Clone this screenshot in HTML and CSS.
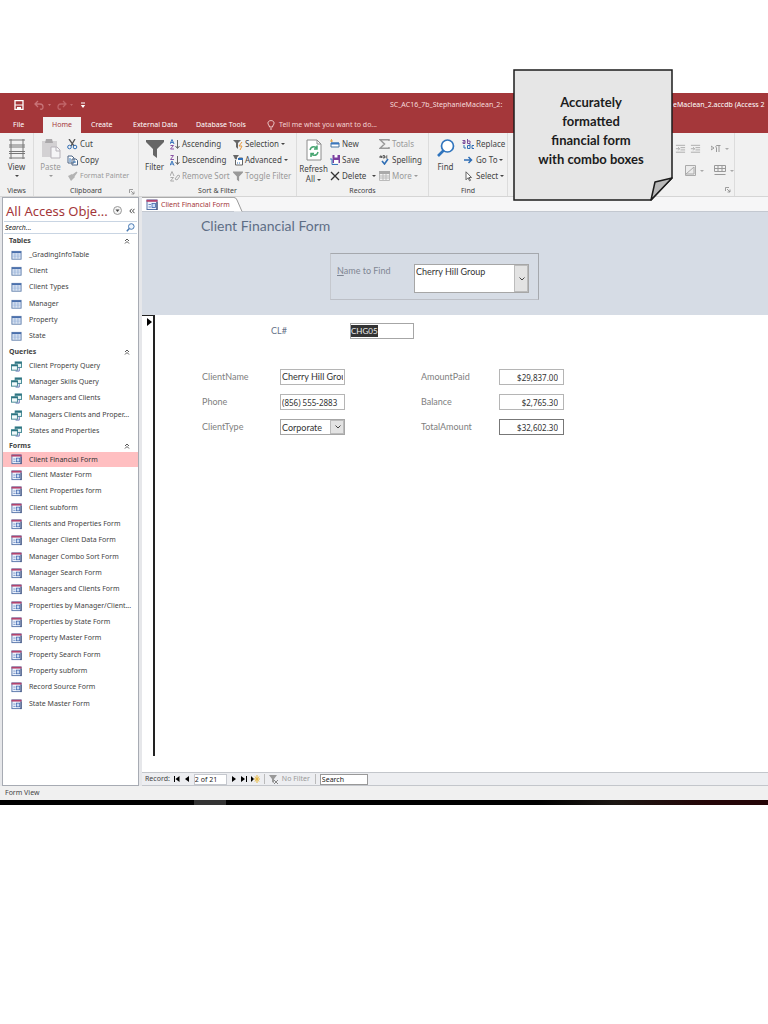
FILE: index.html
```html
<!DOCTYPE html>
<html lang="en">
<head>
<meta charset="utf-8">
<title>Client Financial Form</title>
<link rel="stylesheet" href="styles.css">
</head>
<body>
<svg class="defs" aria-hidden="true">
  <symbol id="table" viewBox="0 0 12 11"><rect x="1" y="1" width="10" height="8.500" fill="#f4f8fd" stroke="#5b7aa8"/><path d="M1 2h10" stroke="#4a70ad" stroke-width="2"/><path d="M4.300 3v6M7.600 3v6M1 5h10M1 7h10" stroke="#8aa8d4" stroke-width=".8"/></symbol>
  <symbol id="query" viewBox="0 0 12 12"><rect x="4.500" y="1" width="7" height="6" fill="#e3f3f3" stroke="#3f8590"/><path d="M4.500 2h7" stroke="#2d7381" stroke-width="2"/><rect x=".5" y="4" width="6.500" height="6" fill="#f2fafb" stroke="#3f8590"/><path d="M.5 5h7" stroke="#2d7381" stroke-width="1.500"/><path d="M5 11h4V7" fill="none" stroke="#5a6fb0"/></symbol>
  <symbol id="form" viewBox="0 0 12 12"><rect x="1" y="1" width="10" height="9.500" fill="#eef3fc" stroke="#5472a8"/><path d="M.5 1.800h11" stroke="#b3426d" stroke-width="2"/><path d="M2.500 5.500H5M2.500 8H5" stroke="#6f8fc6"/><rect x="6" y="4.500" width="3.500" height="4" fill="#c9daf4" stroke="#4068ae" stroke-width=".8"/><path d="M11 3v8" stroke="#2e3c69"/></symbol>
  <symbol id="up" viewBox="0 0 6 6"><path d="M1 3l2-2 2 2M1 5.500l2-2 2 2" fill="none" stroke="#444" stroke-width=".9"/></symbol>
  <symbol id="launch" viewBox="0 0 6 6"><path d="M.5 4V.5H4M2 2l3 3M5 2.500V5H2.500" fill="none" stroke="#888" stroke-width=".8"/></symbol>
  <symbol id="funnel" viewBox="0 0 18 18"><path d="M0 0h18v2l-7 7v9l-4-3V9L0 2z" fill="currentColor"/></symbol>
  <symbol id="indent" viewBox="0 0 12 10"><path d="M1 1h10M6 3.500h5M6 6h5M1 8.500h10M1 4.700h4M3.500 3L5 4.700 3.500 6.500" fill="none" stroke="#a9a9a9"/></symbol>
</svg>
<div class="app">
  <header class="titlebar">
    <div class="quick">
      <button aria-label="Save"><svg width="10" height="10" viewBox="0 0 10 10"><path d="M1 .7h8v8.600H1z" fill="none" stroke="#fff" stroke-width="1.300"/><path d="M1 5h8" stroke="#fff"/><path d="M3 7h4v3H3z" fill="#fff"/></svg></button>
      <button class="faded" aria-label="Undo"><svg width="18" height="10" viewBox="0 0 18 10"><path d="M4 1L1 4l3 3M1 4h5q3 0 3 3t-3 2" fill="none" stroke="#c87478" stroke-width="1.300"/><path d="M14 4h3l-1.500 2z" fill="#c87478"/></svg></button>
      <button class="faded" aria-label="Redo"><svg width="18" height="10" viewBox="0 0 18 10"><path d="M6 1l3 3-3 3M9 4H4Q1 4 1 7t3 2" fill="none" stroke="#c06468" stroke-width="1.300"/><path d="M13 4h3l-1.500 2z" fill="#c06468"/></svg></button>
      <button aria-label="Customize toolbar"><svg width="6" height="7" viewBox="0 0 6 7"><path d="M1 1h4" stroke="#fff"/><path d="M.8 3h4.400L3 6z" fill="#fff"/></svg></button>
    </div>
    <span class="db">SC_AC16_7b_StephanieMaclean_2:</span>
    <span class="path">eMaclean_2.accdb (Access 2</span>
  </header>
  <nav class="tabs">
    <a href="#" class="file">File</a><a href="#" class="on">Home</a><a href="#" class="create">Create</a><a href="#" class="ext">External Data</a><a href="#" class="tools">Database Tools</a>
    <button class="tell"><svg width="8" height="10" viewBox="0 0 8 10"><path d="M2.500 7Q2.500 6 1.500 4.800C0 2 2 .6 4 .6s4 1.400 2.500 4.200Q5.500 6 5.500 7zM3 9h2" fill="none" stroke="#f0d0d0"/></svg>Tell me what you want to do...</button>
  </nav>
  <section class="ribbon">
    <div class="group views">
      <div class="tools-row">
        <button class="big"><svg width="18" height="20" viewBox="0 0 18 20"><path d="M1 1h16M1 6h16M1 8h16M1 12.500h16M1 14.500h16M1 19h16M3 0v20M15 0v20" stroke="#777"/></svg><span>View</span><i class="caret"></i></button>
      </div>
      <div class="label">Views</div>
    </div>
    <div class="group clipboard">
      <div class="tools-row">
        <button class="big off"><svg width="20" height="20" viewBox="0 0 20 20"><path d="M1 2h15v16H1z" fill="#d3d1d3"/><path d="M5 0h6l1 4H4z" fill="#aaa8aa"/><path d="M10 8h6l3 3v8h-9z" fill="#f5f5f7" stroke="#b7b3ba"/><path d="M15 8v4h4" fill="none" stroke="#b7b3ba"/></svg><span>Paste</span><i class="caret"></i></button>
        <div class="col">
          <button><svg width="11" height="11" viewBox="0 0 11 11"><path d="M2 0l5 7M8 0L4 7" stroke="#555" stroke-width="1.300"/><circle cx="2.500" cy="8" r="1.800" fill="none" stroke="#2f6eb5"/><circle cx="8" cy="8" r="1.800" fill="none" stroke="#2f6eb5"/></svg>Cut</button>
          <button><svg width="11" height="11" viewBox="0 0 11 11"><path d="M1 1h4l2 2v5H1zM5 4h4l1.500 1.500V10H5z" fill="#fff" stroke="#4c6584"/><path d="M2 4h2M2 6h2M6 7h3" stroke="#347abf"/></svg>Copy</button>
          <button class="off wide"><svg width="11" height="11" viewBox="0 0 11 11"><path d="M9.500.5l1 1-3 4-2-2zM5 3l3 3-4 4-3-5z" fill="#b3b3b3"/></svg>Format Painter</button>
        </div>
      </div>
      <div class="label">Clipboard<svg class="corner" width="6" height="6"><use href="#launch"/></svg></div>
    </div>
    <div class="group sort">
      <div class="tools-row">
        <button class="big"><svg class="dark" width="18" height="20"><use href="#funnel"/></svg><span>Filter</span></button>
        <div class="col c1">
          <button><svg width="10" height="11" viewBox="0 0 10 11"><path d="M0 5l2-4.500L4 5M1 3.500h2" fill="none" stroke="#3a76bd"/><path d="M.5 6.500h3L.5 10h3.500" fill="none" stroke="#8a55a5"/><path d="M7.500 1v8M5.500 7l2 2.500 2-2.500" fill="none" stroke="#666"/></svg>Ascending</button>
          <button><svg width="10" height="11" viewBox="0 0 10 11"><path d="M.5.500h3L.5 4.500H4" fill="none" stroke="#8a55a5"/><path d="M0 10.500L2 6l2 4.500M1 9h2" fill="none" stroke="#3a76bd"/><path d="M7.500 1v8M5.500 7l2 2.500 2-2.500" fill="none" stroke="#666"/></svg>Descending</button>
          <button class="off"><svg width="10" height="11" viewBox="0 0 10 11"><path d="M0 5l2-4.500L4 5M.5 6.500h3L.5 10h3.500M5 8l3-4 2 1-3 4z" fill="none" stroke="#aaa"/></svg>Remove Sort</button>
        </div>
        <div class="col">
          <button><svg width="10" height="11" viewBox="0 0 10 11"><path d="M0 1h8L5 4v6L3 8V4z" fill="#666"/><path d="M9 3L6 7h3l-2 4" fill="none" stroke="#e89a3c"/></svg>Selection<i class="caret"></i></button>
          <button><svg width="10" height="11" viewBox="0 0 10 11"><path d="M0 0h6L4 2.500V5L2 4z" fill="#666"/><path d="M2.500 5v5h7V3H6" fill="#fff" stroke="#666"/><path d="M5 4h5" stroke="#2f6eb5" stroke-width="2"/><path d="M4 8h4" stroke="#2f6eb5" stroke-dasharray="1 1"/></svg>Advanced<i class="caret"></i></button>
          <button class="off"><svg width="10" height="11"><use href="#funnel"/></svg>Toggle Filter</button>
        </div>
      </div>
      <div class="label">Sort &amp; Filter</div>
    </div>
    <div class="group records">
      <div class="tools-row">
        <button class="big"><svg width="16" height="22" viewBox="0 0 16 22"><path d="M1 1h10l4 4v16H1z" fill="#fff" stroke="#8c8c8c"/><path d="M11 1v4h4" fill="none" stroke="#8c8c8c"/><path d="M4 11q1-4 5-3l2 1M11 6.500V10H8M12 13q-1 4-5 3l-2-1M5 18v-3.500h3" fill="none" stroke="#48a672" stroke-width="1.500"/></svg><span>Refresh<br>All <i class="caret"></i></span></button>
        <div class="col c1">
          <button><svg width="10" height="10" viewBox="0 0 10 10"><path d="M1 4h8v4H1z" fill="#fff" stroke="#49759f"/><path d="M1 4.500h8" stroke="#3a76bd" stroke-width="2"/><path d="M0 2h3M1.500 0v3" stroke="#e4a94e"/></svg>New</button>
          <button><svg width="10" height="10" viewBox="0 0 10 10"><path d="M2.500 0H10v8H2.500z" fill="#7b3f9e"/><path d="M4.500 0h3v2.500h-3zM4 5h4.500v3H4z" fill="#fff"/><path d="M0 4h2v5.500h6" fill="none" stroke="#3a76bd"/></svg>Save</button>
          <button><svg width="10" height="10" viewBox="0 0 10 10"><path d="M1 1l8 8M9 1L1 9" stroke="#333" stroke-width="1.300"/></svg>Delete<i class="caret far"></i></button>
        </div>
        <div class="col">
          <button class="off"><svg width="11" height="10" viewBox="0 0 11 10"><path d="M10 2V.7H1L5.500 5 1 9.300h9V8" fill="none" stroke="#999" stroke-width="1.500"/></svg>Totals</button>
          <button><svg width="11" height="10" viewBox="0 0 11 10"><path d="M1 3V1h1.500v2M1 2h1.500M4 .5v2.500h1.500V.5zM8.500 1H7v2h1.500" fill="none" stroke="#444" stroke-width=".8"/><path d="M3 6l2.500 3L9 4" fill="none" stroke="#2f6eb5" stroke-width="1.600"/></svg>Spelling</button>
          <button class="off"><svg width="11" height="10" viewBox="0 0 11 10"><path d="M.5.500h10v9H.5zM.5 5h10M.5 7h10M4 3v6M7 3v6" fill="none" stroke="#bbb"/><path d="M0 1.500h11" stroke="#aaa" stroke-width="3"/></svg>More<i class="caret"></i></button>
        </div>
      </div>
      <div class="label">Records</div>
    </div>
    <div class="group find">
      <div class="tools-row">
        <button class="big"><svg width="18" height="20" viewBox="0 0 18 20"><circle cx="10.500" cy="7" r="6" fill="#fff" stroke="#2f74bd" stroke-width="1.700"/><path d="M6.500 11.500L1 17" stroke="#2f74bd" stroke-width="2.600"/></svg><span>Find</span></button>
        <div class="col">
          <button><svg width="12" height="11" viewBox="0 0 12 11"><path d="M.5 1.500h2.500v3H1V3h2M5.500 0v4.500H8V2H5.500" fill="none" stroke="#784b9a"/><path d="M2 6v3h2M8 6.500H5.500v3H8V5M12 6.500h-2v3h2" fill="none" stroke="#2f6eb5"/></svg>Replace</button>
          <button><svg width="12" height="10" viewBox="0 0 12 10"><path d="M2 5h7M6.500 2l3 3-3 3" fill="none" stroke="#2f6eb5" stroke-width="1.500"/></svg>Go To<i class="caret"></i></button>
          <button><svg width="12" height="11" viewBox="0 0 12 11"><path d="M4 .8v8l2-2 1.500 3 1-.5L7 6.500h2.500z" fill="#fff" stroke="#555" stroke-width=".9"/></svg>Select<i class="caret"></i></button>
        </div>
      </div>
      <div class="label">Find</div>
    </div>
    <div class="group format">
      <div class="format-row">
        <button aria-label="Decrease indent"><svg width="11" height="10"><use href="#indent"/></svg></button>
        <button aria-label="Increase indent"><svg width="11" height="10"><use href="#indent"/></svg></button>
        <button class="split" aria-label="Text direction"><svg width="10" height="9" viewBox="0 0 10 9"><path d="M0 2l3 2-3 2zM9.500 1.500H5.500q-1.500 1.200 0 2.500V8M8 1.500V8" fill="none" stroke="#999"/></svg><i class="caret"></i></button>
      </div>
      <div class="format-row">
        <button class="split" aria-label="Background color"><svg width="11" height="11" viewBox="0 0 11 11"><path d="M.5 10.500V.5h10v10zM1 9l8-7v7z" fill="#ececec" stroke="#aaa"/></svg><i class="caret"></i></button>
        <button class="split" aria-label="Gridlines"><svg width="12" height="11" viewBox="0 0 12 11"><path d="M.5.500h11v6H.5zM.5 3.500h11M4 0v7M8 0v7M.5 9.500h11" fill="none" stroke="#999"/></svg><i class="caret"></i></button>
      </div>
      <svg class="corner" width="6" height="6"><use href="#launch"/></svg>
    </div>
  </section>
  <div class="work">
    <aside class="pane">
      <div class="pane-head"><h2>All Access Obje...</h2><button aria-label="Filter objects"><svg width="9" height="9" viewBox="0 0 9 9"><circle cx="4.500" cy="4.500" r="4" fill="#f4f4f4" stroke="#999"/><path d="M2.500 3.500h4l-2 2.500z" fill="#444"/></svg></button><button aria-label="Collapse pane"><svg width="6" height="6" viewBox="0 0 6 6"><path d="M2.800.800L.8 3l2 2.200M5.500.800l-2 2.200 2 2.200" fill="none" stroke="#444"/></svg></button></div>
      <div class="search"><input aria-label="Search objects" placeholder="Search..."><svg width="9" height="9" viewBox="0 0 9 9"><circle cx="5.300" cy="3.500" r="2.800" fill="#eef6ff" stroke="#4a7ab3"/><path d="M3.300 5.500L.8 8.200" stroke="#4a7ab3" stroke-width="1.500"/></svg></div>
      <h3>Tables<svg width="6" height="6"><use href="#up"/></svg></h3>
      <ul>
        <li><a href="#"><svg><use href="#table"/></svg>_GradingInfoTable</a></li>
        <li><a href="#"><svg><use href="#table"/></svg>Client</a></li>
        <li><a href="#"><svg><use href="#table"/></svg>Client Types</a></li>
        <li><a href="#"><svg><use href="#table"/></svg>Manager</a></li>
        <li><a href="#"><svg><use href="#table"/></svg>Property</a></li>
        <li><a href="#"><svg><use href="#table"/></svg>State</a></li>
      </ul>
      <h3>Queries<svg width="6" height="6"><use href="#up"/></svg></h3>
      <ul>
        <li><a href="#"><svg><use href="#query"/></svg>Client Property Query</a></li>
        <li><a href="#"><svg><use href="#query"/></svg>Manager Skills Query</a></li>
        <li><a href="#"><svg><use href="#query"/></svg>Managers and Clients</a></li>
        <li><a href="#"><svg><use href="#query"/></svg>Managers Clients and Proper...</a></li>
        <li><a href="#"><svg><use href="#query"/></svg>States and Properties</a></li>
      </ul>
      <h3>Forms<svg width="6" height="6"><use href="#up"/></svg></h3>
      <ul>
        <li><a href="#" class="current"><svg><use href="#form"/></svg>Client Financial Form</a></li>
        <li><a href="#"><svg><use href="#form"/></svg>Client Master Form</a></li>
        <li><a href="#"><svg><use href="#form"/></svg>Client Properties form</a></li>
        <li><a href="#"><svg><use href="#form"/></svg>Client subform</a></li>
        <li><a href="#"><svg><use href="#form"/></svg>Clients and Properties Form</a></li>
        <li><a href="#"><svg><use href="#form"/></svg>Manager Client Data Form</a></li>
        <li><a href="#"><svg><use href="#form"/></svg>Manager Combo Sort Form</a></li>
        <li><a href="#"><svg><use href="#form"/></svg>Manager Search Form</a></li>
        <li><a href="#"><svg><use href="#form"/></svg>Managers and Clients Form</a></li>
        <li><a href="#"><svg><use href="#form"/></svg>Properties by Manager/Client...</a></li>
        <li><a href="#"><svg><use href="#form"/></svg>Properties by State Form</a></li>
        <li><a href="#"><svg><use href="#form"/></svg>Property Master Form</a></li>
        <li><a href="#"><svg><use href="#form"/></svg>Property Search Form</a></li>
        <li><a href="#"><svg><use href="#form"/></svg>Property subform</a></li>
        <li><a href="#"><svg><use href="#form"/></svg>Record Source Form</a></li>
        <li><a href="#"><svg><use href="#form"/></svg>State Master Form</a></li>
      </ul>
    </aside>
    <main class="doc">
      <div class="doc-tabs"><a href="#"><svg width="12" height="12"><use href="#form"/></svg>Client Financial Form</a><svg class="slant" width="9" height="15" viewBox="0 0 9 15"><path d="M0 .5Q2 .5 3 3L8 14.500H0z" fill="#fff"/><path d="M0 .5Q2 .5 3 3L8 14.500" fill="none" stroke="#999"/></svg></div>
      <div class="form-head">
        <h1>Client Financial Form</h1>
        <div class="finder">
          <label for="find-name"><u>N</u>ame to Find</label>
          <div class="combo tall"><select id="find-name"><option>Cherry Hill Group</option></select><svg width="6" height="4" viewBox="0 0 6 4"><path d="M.5.500L3 3l2.500-2.500" fill="none" stroke="#444"/></svg></div>
        </div>
      </div>
      <div class="record">
        <div class="selector"><svg width="5" height="8" viewBox="0 0 5 8"><path d="M0 0l5 4-5 4z"/></svg></div>
        <form class="fields">
          <div class="key"><span id="cl-label">CL#</span><div class="box" role="textbox" tabindex="0" aria-labelledby="cl-label"><mark>CHG05</mark></div></div>
          <div class="grid">
            <label for="cn">ClientName</label><input id="cn" value="Cherry Hill Group">
            <label for="ap">AmountPaid</label><input id="ap" class="digits num" value="$29,837.00">
            <label for="ph">Phone</label><input id="ph" class="digits" value="(856) 555-2883">
            <label for="ba">Balance</label><input id="ba" class="digits num" value="$2,765.30">
            <label for="ct">ClientType</label><div class="combo"><select id="ct"><option>Corporate</option></select><svg width="6" height="4" viewBox="0 0 6 4"><path d="M.5.500L3 3l2.500-2.500" fill="none" stroke="#444"/></svg></div>
            <label for="ta">TotalAmount</label><input id="ta" class="digits num strong" value="$32,602.30">
          </div>
        </form>
      </div>
      <footer class="recnav">
        <label for="rec">Record:</label>
        <button aria-label="First record"><svg width="6" height="6" viewBox="0 0 6 6"><path d="M0 0h1v6H0zM5.500 0v6L1.500 3z"/></svg></button>
        <button aria-label="Previous record"><svg width="6" height="6" viewBox="0 0 6 6"><path d="M5 0v6L1 3z"/></svg></button>
        <input id="rec" value="2 of 21">
        <button aria-label="Next record"><svg width="6" height="6" viewBox="0 0 6 6"><path d="M1 0v6l4-3z"/></svg></button>
        <button aria-label="Last record"><svg width="6" height="6" viewBox="0 0 6 6"><path d="M0 0v6l4-3zM5 0h1v6H5z"/></svg></button>
        <button aria-label="New record"><svg width="9" height="8" viewBox="0 0 9 8"><path d="M0 1v6l3-3z"/><path d="M6 0v8M3 4h6M4 1.500l4 5M8 1.500l-4 5" stroke="#e8b93f"/></svg></button>
        <button class="nofilter"><svg width="10" height="9" viewBox="0 0 10 9"><path d="M0 0h8L5 4v4L3 7V4z" fill="#999"/><path d="M5 5l4 4M9 5L5 9" stroke="#888"/></svg>No Filter</button>
        <input class="find-box" aria-label="Search records" value="Search">
      </footer>
    </main>
  </div>
  <div class="status">Form View</div>
  <div class="taskbar"><span></span></div>
  <aside class="note">
    <svg viewBox="0 0 160 133"><path d="M1 1h158v108l-21 22H1z" fill="#e6e6e6" stroke="#1c1c1c" stroke-width="1.500"/><path d="M159 109l-17 4-4 18z" fill="#b9b9b9" stroke="#1c1c1c" stroke-width="1.500" stroke-linejoin="round"/></svg>
    <p>Accurately<br>formatted<br>financial form<br>with combo boxes</p>
  </aside>
</div>
</body>
</html>
```
FILE: styles.css
```css
* { box-sizing: border-box; }
body { margin: 0; background: #fff; color: #444; font: 8px/10px "Noto Sans", sans-serif; }
button, input, select { font: inherit; color: inherit; margin: 0; padding: 0; border: 0; background: none; border-radius: 0; }
a { color: inherit; text-decoration: none; }
h1, h2, h3, p, ul { margin: 0; padding: 0; font-weight: 400; }
ul { list-style: none; }
svg { flex: none; display: block; }
.defs { position: absolute; width: 0; height: 0; }
.app { position: relative; padding-top: 93px; overflow: hidden; }

.titlebar { display: flex; align-items: center; height: 24px; background: #a4373a; color: #f6dcdc; white-space: nowrap; overflow: hidden; font-size: 7px; }
.quick { display: flex; align-items: center; gap: 5px; width: 390px; padding-left: 14px; flex: none; }
.quick button:nth-child(2) { margin-left: 5px; }
.db { width: 283px; flex: none; }
.path { color: #fff; }
.tabs { display: flex; height: 16px; background: #a4373a; color: #fff; line-height: 16px; font-size: 7px; white-space: nowrap; }
.tabs a { flex: none; }
.file { width: 43px; padding-left: 13px; }
.on { width: 38px; background: #f1f1f1; color: #a4373a; text-align: center; }
.create { width: 52px; padding-left: 10px; }
.ext { width: 63px; }
.tools { width: 71px; }
.tell { display: flex; align-items: center; gap: 4px; color: #f3d3d3; }

.ribbon { display: flex; height: 64px; background: #f1f1f1; border-bottom: 1px solid #d5d5d5; white-space: nowrap; }
.group { display: flex; flex-direction: column; border-right: 1px solid #dcdcdc; padding-top: 3px; flex: none; }
.views { width: 34px; }
.clipboard { width: 105px; }
.sort { width: 158px; }
.records { width: 132px; }
.find { width: 79px; }
.format { width: 227px; position: relative; padding: 10px 0 0 167px; gap: 11px; }
.tools-row { display: flex; height: 49px; }
.label { position: relative; text-align: center; font-size: 7px; line-height: 8px; padding-top: 2px; }
.corner { position: absolute; right: 3px; bottom: 3px; }
.label .corner { bottom: 0; }
.big { display: flex; flex-direction: column; align-items: center; width: 33px; padding-top: 3px; flex: none; }
.big span { padding-top: 3px; }
.off { color: #999; }
.dark { color: #666; }
.col { display: flex; flex-direction: column; }
.col button { display: flex; align-items: center; gap: 2px; height: 16px; }
.sort .c1 { width: 63px; }
.sort .big { width: 31px; }
.records .c1 { width: 49px; }
.wide { font-size: 7px; }
.caret { display: inline-block; flex: none; border: 2px solid transparent; border-top-color: currentColor; border-bottom: 0; vertical-align: middle; }
.big > .caret { margin-top: 3px; }
.far { margin-left: 4px; }
.format-row { display: flex; gap: 4px; height: 11px; align-items: center; }
.format-row + .format-row { padding-left: 10px; gap: 10px; }
.split { display: flex; align-items: center; gap: 4px; color: #aaa; }
.format-row .split:last-child { margin-left: 6px; }
.format-row + .format-row .split:last-child { margin-left: 0; }

.work { display: flex; min-height: 589px; background: #e6e7ea; }
.pane { width: 137px; margin-left: 2px; flex: none; background: #fff; border: 1px solid #a7abb3; }
.pane-head { display: flex; align-items: center; height: 23px; padding: 2px 3px 0; gap: 7px; }
.pane-head h2 { flex: 1; min-width: 0; color: #a4373a; font-size: 13px; line-height: 20px; white-space: nowrap; }
.search { display: flex; align-items: center; height: 13px; border: 1px solid #c9d5e3; border-width: 1px 0; margin: 0 1px; padding: 0 2px 0 1px; }
.search input { flex: 1; min-width: 0; font-style: italic; font-size: 7px; }
.search input::placeholder { color: #222; opacity: 1; }
.pane h3 { display: flex; align-items: center; justify-content: space-between; height: 13px; padding: 0 8px 0 6px; font-size: 7px; font-weight: 700; }
.pane ul { font-size: 7px; }
.pane li a { display: flex; align-items: center; gap: 7px; height: 16px; padding-left: 8px; white-space: nowrap; }
.pane li svg { width: 11px; height: 11px; }
.pane li:nth-child(3n) { margin-bottom: 1px; }
.pane .current { background: #ffbfc1; color: #333; height: 15px; }
.doc { flex: 1; min-width: 0; margin-left: 3px; display: flex; flex-direction: column; background: #fff; }
.doc-tabs { display: flex; height: 15px; background: #f6f6f7; border-bottom: 1px solid #c3c8d0; }
.doc-tabs a { display: flex; align-items: center; gap: 3px; width: 92px; padding-left: 4px; color: #a4373a; background: #fff; font-size: 7px; white-space: nowrap; border-top: 1px solid #aaa; }
.form-head { height: 103px; background: #d6dce5; padding: 4px 0 0 59px; font-family: Lato, sans-serif; }
h1 { font-size: 14px; line-height: 20px; color: #5e6e85; }
.finder { display: flex; width: 209px; height: 47px; margin: 17px 0 0 129px; padding: 10px 9px 0 6px; border: 1px solid #a5a8ad; border-left-color: #c5c8ce; border-bottom-color: #bcbfc6; justify-content: space-between; font-size: 9px; line-height: 14px; color: #7f8693; }
.combo { position: relative; display: flex; height: 16px; border: 1px solid #a6a6a6; background: #fff; color: #333; }
.combo select { appearance: none; width: 100%; padding-left: 1px; }
.combo svg { position: absolute; right: 3px; top: 50%; margin-top: -2px; z-index: 1; }
.combo::after { content: ""; position: absolute; right: 0; top: 0; bottom: 0; width: 12px; background: #e3e3e3; border: 1px solid #bcbcbc; pointer-events: none; }
.tall { width: 115px; height: 29px; }
.tall select { height: 13px; }
.record { display: flex; flex: 1; padding-bottom: 16px; }
.selector { width: 13px; flex: none; border: solid #222; border-width: 1px 2px 0 0; padding: 2px 0 0 5px; }
.fields { padding: 8px 0 0 47px; font: 9px/16px Lato, sans-serif; color: #808080; }
.key { display: grid; grid-template-columns: 79px 64px; padding-left: 69px; color: #667388; }
.box { border: 1px solid #a6a6a6; height: 16px; line-height: 14px; }
mark { display: inline-block; background: #333; color: #eee; line-height: 12px; vertical-align: top; margin-top: 1px; font-size: 8px; }
.grid { display: grid; grid-template-columns: 78px 141px 78px 64px; row-gap: 9px; margin-top: 30px; }
.grid input { width: 65px; height: 16px; border: 1px solid #b5b5b5; padding: 0 1px; color: #333; }
.grid .combo { width: 65px; }
.grid .digits { font: 8px "Noto Sans", sans-serif; }
.grid .num { text-align: right; padding-right: 5px; }
.grid .strong { border-color: #777; }
.recnav { display: flex; align-items: center; height: 14px; padding-left: 3px; gap: 4px; background: #edeef1; border: 1px solid #c3c6cb; border-width: 1px 0; font-size: 7px; white-space: nowrap; }
.recnav input { background: #fff; border: 1px solid #c5c8ce; height: 11px; width: 33px; color: #222; }
.recnav .find-box { width: 48px; border-color: #999; padding-left: 1px; }
.nofilter { display: flex; align-items: center; gap: 3px; padding: 0 5px 0 4px; border: solid #bbb; border-width: 0 1px; color: #999; }
.status { height: 14px; padding-left: 5px; background: #f0f0f0; font-size: 7px; line-height: 14px; }
.taskbar { height: 5px; background: linear-gradient(90deg, #000 70%, #1c1713 80%, #240507 92%); }
.taskbar span { display: block; height: 5px; width: 32px; margin-left: 194px; background: #333; }
.note { position: absolute; left: 513px; top: 69px; width: 160px; }
.note p { position: absolute; inset: 24px 4px auto 0; text-align: center; font: 700 13px/19px Lato, sans-serif; color: #1c1c1c; }
```
